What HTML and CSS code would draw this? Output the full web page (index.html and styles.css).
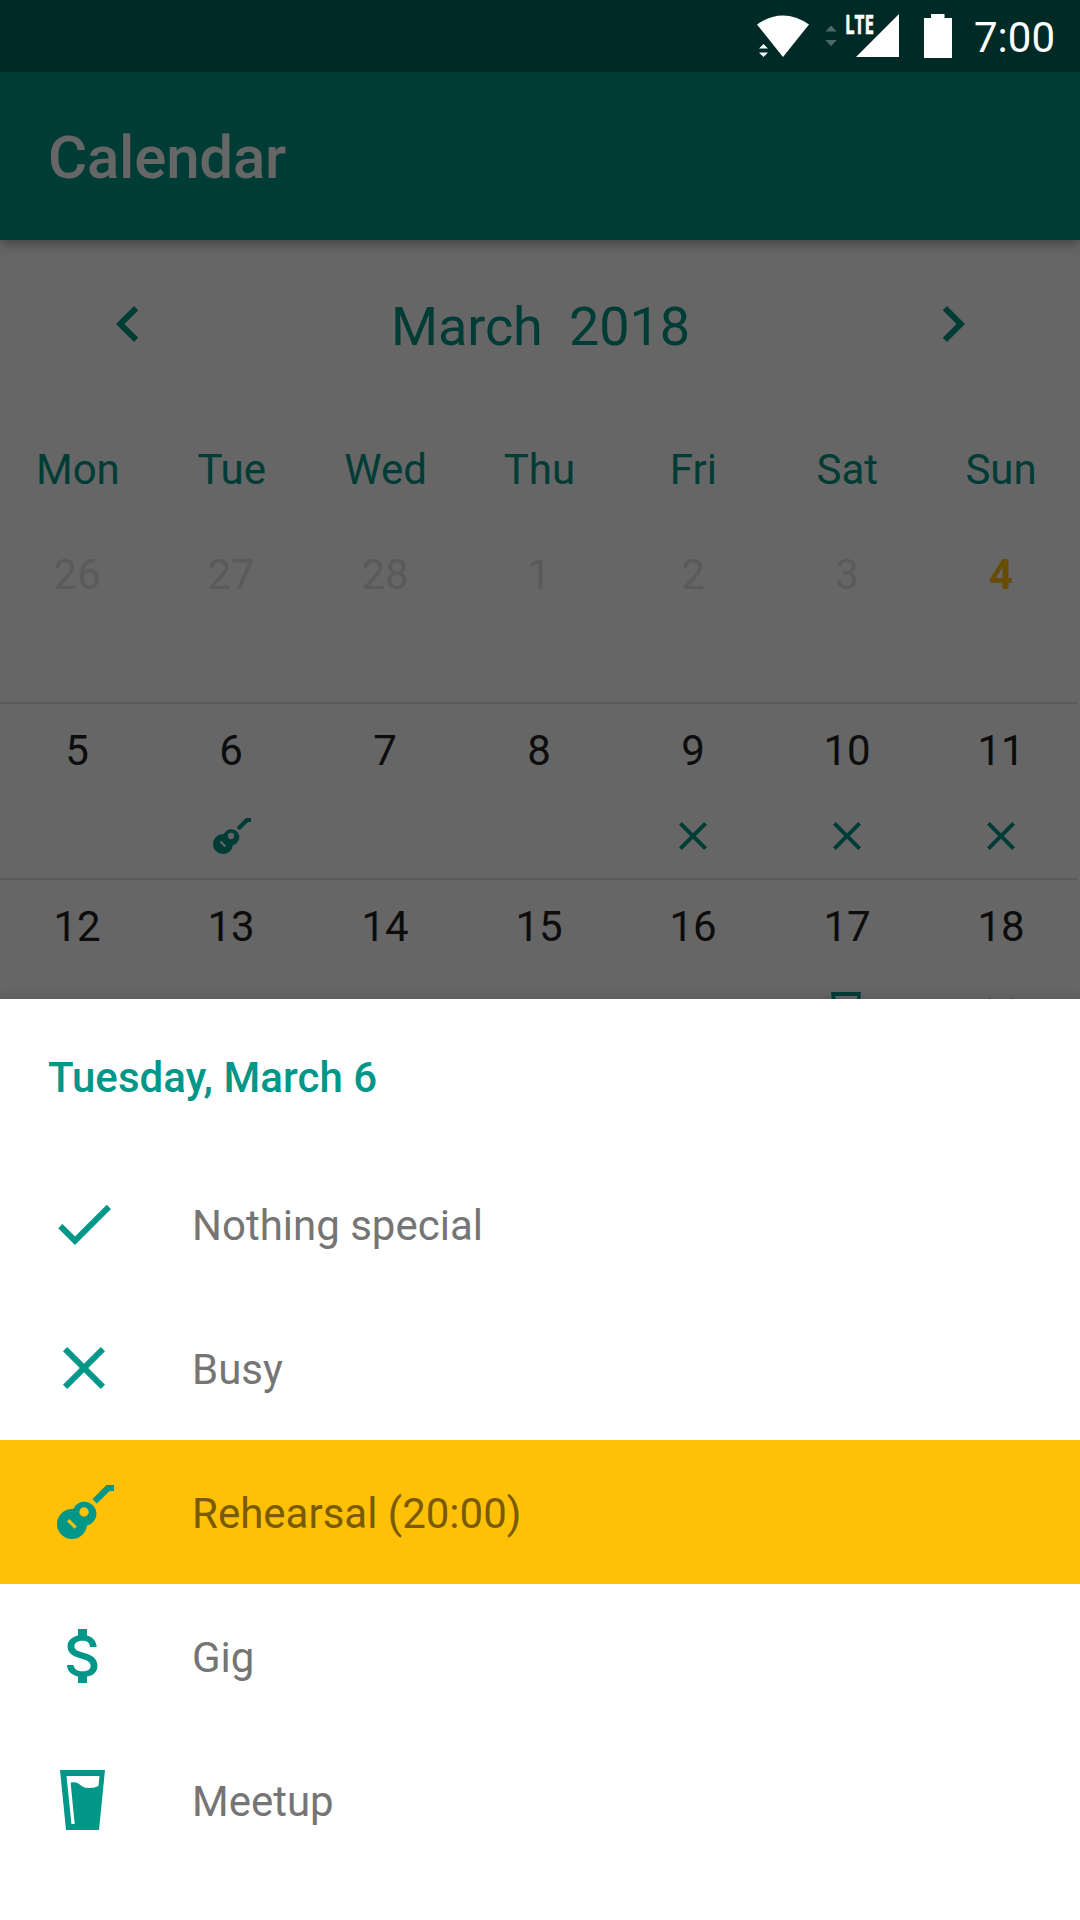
FILE: index.html
```html
<!DOCTYPE html>
<html lang="en">
<head>
<meta charset="utf-8">
<title>Calendar</title>
<link rel="stylesheet" href="styles.css">
</head>
<body>
<svg class="defs" aria-hidden="true">
  <symbol id="check" viewBox="0 0 24 24"><path d="M9 16.17L4.83 12l-1.42 1.41L9 19 21 7l-1.41-1.41z"/></symbol>
  <symbol id="close" viewBox="0 0 24 24"><path d="M19 6.41L17.59 5 12 10.59 6.41 5 5 6.41 10.59 12 5 17.59 6.41 19 12 13.41 17.59 19 19 17.59 13.41 12z"/></symbol>
  <symbol id="guitar" viewBox="0 0 72 72">
    <path fill-rule="evenodd" d="M24 33A15 15 0 1 0 38.9 49.5A12 12 0 1 0 25.5 32.8ZM31.3 36a4.7 4.7 0 1 0 9.4 0a4.7 4.7 0 1 0-9.4 0ZM19 45.3L21.3 43 28.8 50.5 26.5 52.8Z"/>
    <path d="M44.4 23.2L58.4 9H66V15H61.6L48.9 27.5Z"/>
  </symbol>
  <symbol id="money" viewBox="0 0 24 24"><path d="M11.8 10.9c-2.27-.59-3-1.2-3-2.15 0-1.09 1.01-1.85 2.7-1.85 1.78 0 2.44.85 2.5 2.1h2.21c-.07-1.72-1.12-3.3-3.21-3.81V3h-3v2.16c-1.94.42-3.5 1.68-3.5 3.61 0 2.31 1.91 3.46 4.7 4.13 2.5.6 3 1.48 3 2.41 0 .69-.49 1.79-2.7 1.79-2.06 0-2.87-.92-2.98-2.1h-2.2c.12 2.19 1.76 3.42 3.68 3.83V21h3v-2.15c1.95-.37 3.5-1.5 3.5-3.55 0-2.84-2.43-3.81-4.7-4.4z"/></symbol>
  <symbol id="glass" viewBox="0 0 72 72">
    <path fill-rule="evenodd" d="M12 6H57L51 66H18ZM18.5 12L23.4 60H26.7L22.6 18.8C33 16.5 30 24 41 24C46 24 48 23 50.5 22L51.5 12Z"/>
  </symbol>
  <symbol id="prev" viewBox="0 0 24 24"><path d="M15.41 7.41L14 6l-6 6 6 6 1.41-1.41L10.83 12z"/></symbol>
  <symbol id="next" viewBox="0 0 24 24"><path d="M10 6L8.59 7.41 13.17 12l-4.58 4.59L10 18l6-6z"/></symbol>
</svg>

<div class="status-bar">
  <svg class="status-icons" viewBox="0 0 200 72">
    <path d="M5 24.5Q31 6.500 57 24.500L31 57Z"/>
    <path d="M7 48.500L11.500 44 16 48.500ZM7 52.500H16L11.500 57Z"/>
    <path class="idle" d="M73.500 31.500L79 25.500 84.700 31.500ZM73.500 40H84.700L79 46.300Z"/>
    <path d="M147 14V57H104Z"/>
    <text class="network" x="93" y="34" textLength="29" lengthAdjust="spacingAndGlyphs">LTE</text>
    <path d="M179 14H192.500V18H200V58H172V18H179Z"/>
  </svg>
  <span class="clock">7:00</span>
</div>

<main class="screen">
  <header class="app-bar"><h1>Calendar</h1></header>
  <section class="calendar">
    <div class="month-nav">
      <svg class="icon"><use href="#prev"/></svg>
      <span class="month">March&nbsp; 2018</span>
      <svg class="icon"><use href="#next"/></svg>
    </div>
    <div class="weekdays"><span>Mon</span><span>Tue</span><span>Wed</span><span>Thu</span><span>Fri</span><span>Sat</span><span>Sun</span></div>
    <div class="week past">
      <div class="day">26</div><div class="day">27</div><div class="day">28</div><div class="day">1</div><div class="day">2</div><div class="day">3</div><div class="day today">4</div>
    </div>
    <div class="week">
      <div class="day">5</div>
      <div class="day">6<svg class="mark"><use href="#guitar"/></svg></div>
      <div class="day">7</div>
      <div class="day">8</div>
      <div class="day">9<svg class="mark"><use href="#close"/></svg></div>
      <div class="day">10<svg class="mark"><use href="#close"/></svg></div>
      <div class="day">11<svg class="mark"><use href="#close"/></svg></div>
    </div>
    <div class="week">
      <div class="day">12</div><div class="day">13</div><div class="day">14</div><div class="day">15</div><div class="day">16</div>
      <div class="day">17<svg class="mark"><use href="#glass"/></svg></div>
      <div class="day">18<svg class="mark"><use href="#close"/></svg></div>
    </div>
  </section>
  <div class="scrim"></div>
</main>

<section class="sheet">
  <h2>Tuesday, March 6</h2>
  <ul class="options">
    <li class="option"><svg class="icon"><use href="#check"/></svg><span>Nothing special</span></li>
    <li class="option"><svg class="icon"><use href="#close"/></svg><span>Busy</span></li>
    <li class="option selected"><svg class="icon"><use href="#guitar"/></svg><span>Rehearsal (20:00)</span></li>
    <li class="option"><svg class="icon"><use href="#money"/></svg><span>Gig</span></li>
    <li class="option"><svg class="icon"><use href="#glass"/></svg><span>Meetup</span></li>
  </ul>
</section>
</body>
</html>
```
FILE: styles.css
```css
* { box-sizing: border-box; }
body {
  margin: 0;
  width: 1080px;
  height: 1920px;
  display: flex;
  flex-direction: column;
  overflow: hidden;
  background: #fff;
  font-family: Roboto, sans-serif;
  font-size: 42px;
}
h1, h2, ul { margin: 0; padding: 0; }
.defs { position: absolute; width: 0; height: 0; }
.icon { width: 72px; height: 72px; fill: #009688; flex: none; }

.status-bar {
  flex: none;
  height: 72px;
  display: flex;
  align-items: center;
  justify-content: flex-end;
  gap: 22px;
  padding-right: 25px;
  background: #002a26;
  color: #fff;
}
.status-icons { width: 200px; height: 72px; fill: #fff; }
.status-icons .idle { fill: #4d6a67; }
.network { font: 700 27px "Open Sans", sans-serif; stroke: #fff; stroke-width: .5px; }
.clock { line-height: 72px; padding-top: 3px; }

.screen {
  position: relative;
  flex: none;
  height: 927px;
  overflow: hidden;
  background: #fff;
}
.scrim { position: absolute; inset: 0; background: rgba(0, 0, 0, .6); }
.app-bar {
  height: 168px;
  display: flex;
  align-items: center;
  padding: 4px 48px 0;
  background: #009688;
  box-shadow: 0 4px 12px rgba(0, 0, 0, .35);
}
.app-bar h1 {
  font-size: 60px;
  font-weight: 500;
  line-height: 70px;
  letter-spacing: -.2px;
  color: #fff;
}

.calendar { width: 1078px; color: #212121; }
.month-nav {
  height: 168px;
  display: flex;
  align-items: center;
  justify-content: space-between;
  padding: 0 89px 0 92px;
}
.month { font-size: 54px; letter-spacing: -.15px; color: #009688; padding-top: 4px; }
.weekdays {
  height: 120px;
  display: grid;
  grid-template-columns: repeat(7, 1fr);
  text-align: center;
  line-height: 49px;
  padding: 37px 0 0 1px;
  color: #009688;
}
.week {
  height: 176px;
  display: grid;
  grid-template-columns: repeat(7, 1fr);
  border-bottom: 2px solid #e4e4e4;
}
.day {
  display: flex;
  flex-direction: column;
  align-items: center;
  gap: 37px;
  padding-top: 22px;
  line-height: 49px;
}
.past .day { color: #e2e2e2; }
.past .today { color: #ffc107; font-weight: 700; }
.mark { width: 48px; height: 48px; fill: #009688; }

.sheet {
  position: relative;
  flex: 1;
  background: #fff;
  box-shadow: 0 0 12px rgba(0, 0, 0, .18);
}
.sheet h2 {
  height: 153px;
  padding: 54px 48px 0;
  font-size: 42px;
  font-weight: 500;
  line-height: 49px;
  letter-spacing: .05px;
  color: #009688;
}
.options { list-style: none; }
.option {
  height: 144px;
  display: flex;
  align-items: center;
  gap: 72px;
  padding: 0 48px;
  color: #757575;
}
.option span { padding-top: 2px; }
.option.selected { background: #ffc107; color: #785b03; }
```
